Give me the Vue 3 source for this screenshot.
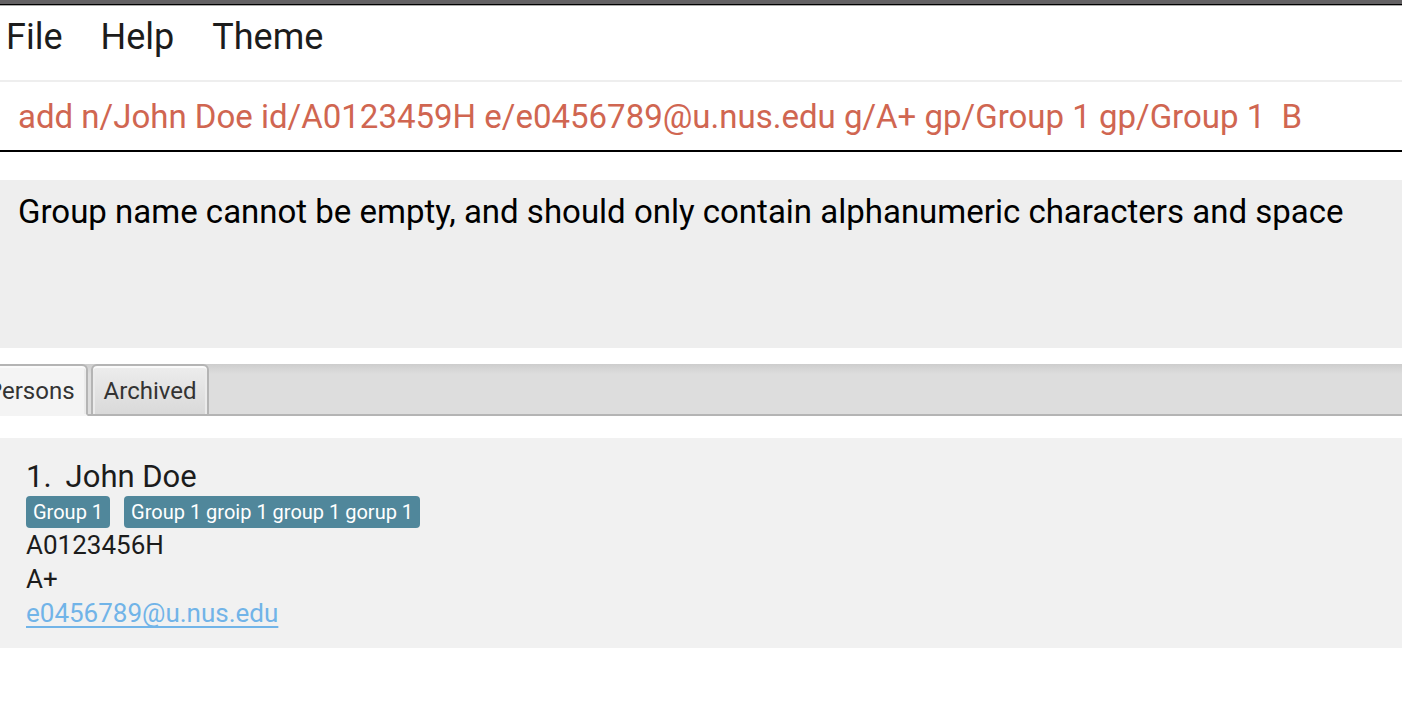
<script setup>
import { ref } from 'vue'

const menus = ['File', 'Help', 'Theme']
const tabs = ['Persons', 'Archived']
const activeTab = ref('Persons')
const command = ref('add n/John Doe id/A0123459H e/e0456789@u.nus.edu g/A+ gp/Group 1 gp/Group 1  B')
const result = 'Group name cannot be empty, and should only contain alphanumeric characters and space'
const persons = [
  {
    name: 'John Doe',
    groups: ['Group 1', 'Group 1 groip 1 group 1 gorup 1'],
    id: 'A0123456H',
    grade: 'A+',
    email: 'e0456789@u.nus.edu'
  }
]
</script>

<template>
  <div class="app">
    <header class="menu-bar">
      <button v-for="menu in menus" :key="menu" type="button" class="menu">{{ menu }}</button>
    </header>

    <form class="command-box" @submit.prevent>
      <input v-model="command" class="command" type="text" aria-label="Command" spellcheck="false" />
    </form>

    <textarea class="result" readonly aria-label="Result" spellcheck="false" :value="result"></textarea>

    <nav class="tabs" role="tablist">
      <button
        v-for="tab in tabs"
        :key="tab"
        type="button"
        role="tab"
        class="tab"
        :class="{ active: tab === activeTab }"
        :aria-selected="tab === activeTab"
        @click="activeTab = tab"
      >{{ tab }}</button>
    </nav>

    <main class="list">
      <article v-for="(person, index) in persons" :key="person.id" class="card">
        <h2 class="name"><span>{{ index + 1 }}.</span><span>{{ person.name }}</span></h2>
        <div class="groups">
          <span v-for="group in person.groups" :key="group" class="group">{{ group }}</span>
        </div>
        <p class="field">{{ person.id }}</p>
        <p class="field">{{ person.grade }}</p>
        <p class="field"><a class="email" :href="'mailto:' + person.email">{{ person.email }}</a></p>
      </article>
    </main>
  </div>
</template>

<style>
body {
  margin: 0;
  background: #fff;
}
</style>

<style scoped>
.app {
  font-family: Roboto, "Liberation Sans", sans-serif;
  color: #1c1c1c;
  border-top: 4px solid #636163;
  overflow: hidden;
}

button,
input,
textarea {
  font-family: inherit;
  margin: 0;
  border-radius: 0;
  outline: none;
}

.menu-bar {
  display: flex;
  gap: 38px;
  padding: 8px 6px 18px;
  border-top: 1px solid #000;
  border-bottom: 2px solid #eee;
  box-shadow: inset 0 1px #aaa;
}

.menu {
  padding: 0;
  border: 0;
  background: none;
  color: #1c1c1c;
  font-size: 36px;
  line-height: 49px;
}

.command-box {
  padding: 10px 0;
  border-bottom: 2px solid #000;
}

.command {
  display: block;
  box-sizing: border-box;
  width: 100%;
  height: 48px;
  padding: 0 18px;
  border: 0;
  background: none;
  color: #d06651;
  font-size: 33px;
}

.result {
  display: block;
  box-sizing: border-box;
  width: 100%;
  height: 168px;
  margin-top: 28px;
  padding: 8px 18px;
  border: 0;
  background: #eee;
  color: #000;
  font-size: 33px;
  line-height: 48px;
  resize: none;
}

.tabs {
  display: flex;
  gap: 3px;
  height: 52px;
  margin-top: 16px;
  background: linear-gradient(#b4b4b4, #b4b4b4) bottom / 100% 2px no-repeat,
    linear-gradient(#cdcdcd, #ddd 10px);
}

.tab {
  box-sizing: border-box;
  padding: 2px 11px 0;
  border: 2px solid #b4b4b4;
  border-radius: 6px 6px 0 0;
  background: linear-gradient(#ededed, #d9d9d9);
  box-shadow: inset 0 2px #fafafa, inset 2px 0 #ebebeb, inset -2px 0 #ebebeb;
  color: #333;
  font-size: 24px;
  line-height: 46px;
}

.tab.active {
  border-bottom-color: #f4f4f4;
  background: #f4f4f4;
}

.tab:first-child {
  margin-left: -26px;
}

.list {
  margin-top: 22px;
}

.card {
  padding: 20px 26px 18px;
  background: #f1f1f1;
}

.name {
  display: flex;
  gap: 14px;
  margin: 0;
  font-size: 31px;
  font-weight: 400;
  line-height: 38px;
}

.groups {
  display: flex;
  flex-wrap: wrap;
  gap: 14px;
}

.group {
  padding: 0 7px;
  border-radius: 4px;
  background: #50879b;
  color: #fff;
  font-size: 20px;
  line-height: 32px;
}

.field {
  margin: 0;
  font-size: 26px;
  line-height: 34px;
}

.email {
  color: #71b4e8;
  text-decoration: underline;
  text-decoration-thickness: 2px;
  text-underline-offset: 4px;
  text-decoration-skip-ink: none;
}
</style>
